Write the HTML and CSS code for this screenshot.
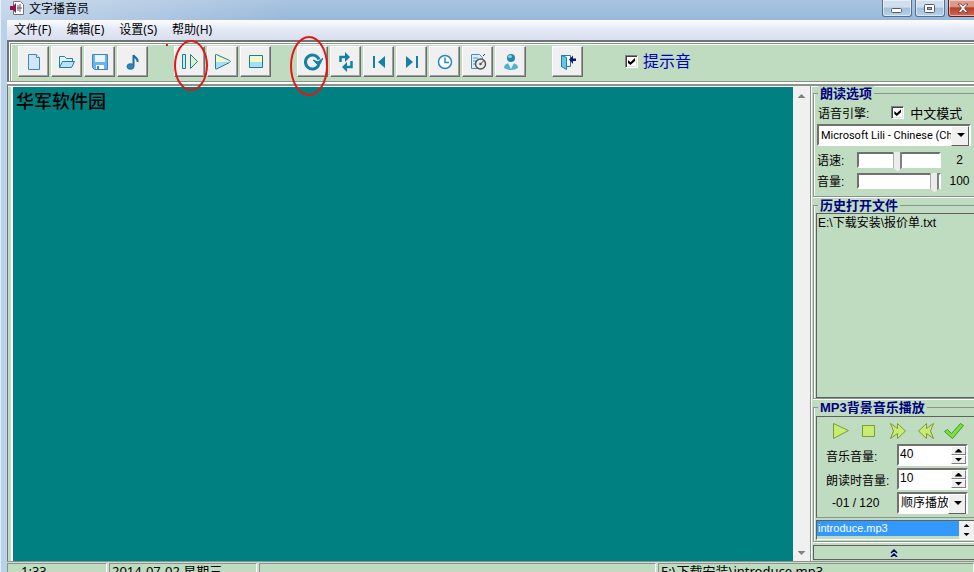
FILE: index.html
```html
<!DOCTYPE html>
<html lang="zh-CN">
<head>
  <meta charset="UTF-8">
  <meta name="viewport" content="width=device-width, initial-scale=1.0">
  <title>文字播音员</title>
  <link rel="stylesheet" href="styles.css">
</head>
<body>
  <div class="window">
    <header class="titlebar">
      <svg class="app-icon" width="14" height="14" viewBox="0 0 14 14">
        <path d="M3.500.5h7l3 3v10h-10z" fill="#fff" stroke="#777"/>
        <path d="M0 5h3l3-3v10l-3-3H0z" fill="#8c1650"/>
        <path d="M8 4v6M10 3v8M7 7h5" stroke="#70506a" fill="none"/>
      </svg>
      <h1>文字播音员</h1>
      <div class="window-controls">
        <button aria-label="最小化"><svg width="12" height="12"><rect x=".5" y="6.500" width="10" height="4" rx="1" fill="#fff" stroke="#555b66"/></svg></button>
        <button aria-label="最大化"><svg width="12" height="12"><rect x=".5" y="2.500" width="10" height="8" rx="1" fill="#fff" stroke="#555b66"/><rect x="3.500" y="5.500" width="4" height="2" fill="#9ab4d0" stroke="#555b66"/></svg></button>
        <button class="close" aria-label="关闭"><svg width="12" height="12"><path d="M1 2h3l2 2 2-2h3L7.500 6 11 10.500H8L6 8l-2 2.500H1L4.500 6z" fill="#fff" stroke="#6b3030" stroke-width=".8"/></svg></button>
      </div>
    </header>

    <nav class="menubar">
      <a href="#">文件(F)</a>
      <a href="#">编辑(E)</a>
      <a href="#">设置(S)</a>
      <a href="#">帮助(H)</a>
    </nav>

    <div class="toolbar">
      <div class="tool-group">
        <button class="tool" aria-label="新建"><svg viewBox="0 0 20 20"><path d="M4.500 2.500h8l3 3v12h-11z" fill="#cfe6fb" stroke="#3d86c6"/><path d="M12.500 2.500v3h3" fill="#fff" stroke="#3d86c6"/></svg></button>
        <button class="tool" aria-label="打开"><svg viewBox="0 0 20 20"><path d="M2.500 15.500v-11h5l2 2h6v3" fill="#e3f7ee" stroke="#1d7fae"/><path d="M2.500 15.500l3-6h12l-3 6z" fill="#b9e3f8" stroke="#1d7fae"/></svg></button>
        <button class="tool" aria-label="保存"><svg viewBox="0 0 20 20"><path d="M2.500 2.500h15v15h-13l-2-2z" fill="#68b4ee" stroke="#3d86c6"/><path d="M5 3h10v7H5z" fill="#e8f6ff"/><path d="M6 13h8v4H6z" fill="#fff"/><path d="M7 14h2v3H7z" fill="#3d86c6"/></svg></button>
        <button class="tool" aria-label="音乐"><svg viewBox="0 0 20 20"><path d="M10.500 14V3c1 3 5 3 4 7" fill="none" stroke="#1e6f9f" stroke-width="2"/><ellipse cx="7.500" cy="14.500" rx="3.500" ry="2.800" fill="#2b86b8" stroke="#1e6f9f"/></svg></button>
      </div>
      <div class="tool-group">
        <button class="tool" aria-label="暂停"><svg viewBox="0 0 20 20"><path d="M2.500 2.500h3v14h-3z" fill="#c8ecf4" stroke="#1c7f8c"/><path d="M10.500 2.500l7 7-7 7z" fill="#ddf4c8" stroke="#1c7f8c" stroke-linejoin="round"/></svg><span class="ring"></span></button>
        <button class="tool" aria-label="播放"><svg viewBox="0 0 20 20"><path d="M3 3l14 7H3z" fill="#eefbc9"/><path d="M3 10h14L3 17z" fill="#a9dcf6"/><path d="M2.500 3q0-1 1-.5l13 6q2 1 0 2l-13 6.500q-1 .5-1-1z" fill="none" stroke="#1c7f8c"/></svg></button>
        <button class="tool" aria-label="停止"><svg viewBox="0 0 20 20"><path d="M4 4h12v6H4z" fill="#eefbc9"/><path d="M4 10h12v6H4z" fill="#a9dcf6"/><path d="M3.500 3.500h13v12h-13z" fill="none" stroke="#1c7f8c"/></svg></button>
      </div>
      <div class="tool-group">
        <button class="tool" aria-label="循环"><svg viewBox="0 0 20 20"><path d="M15.500 13.500a7 7 0 1 1 .5-6" fill="none" stroke="#1380a8" stroke-width="3"/><path d="M10 8l5 2 5-4-4 8z" fill="#1380a8" stroke="#1380a8"/></svg><span class="ring ring-wide"></span></button>
        <button class="tool" aria-label="切换"><svg viewBox="0 0 20 20"><path d="M4.500 10V5H10M15.500 9v6H10" fill="none" stroke="#1380a8" stroke-width="2.500"/><path d="M9 0l5 5-5 5zM11 10v10l-5-5z" fill="#1380a8"/></svg></button>
        <button class="tool" aria-label="上一个"><svg viewBox="0 0 20 20"><path d="M4 4h2v12H4zM16 4v12l-7-6z" fill="#1380a8"/></svg></button>
        <button class="tool" aria-label="下一个"><svg viewBox="0 0 20 20"><path d="M14 4h2v12h-2zM4 4v12l7-6z" fill="#1380a8"/></svg></button>
        <button class="tool" aria-label="定时"><svg viewBox="0 0 20 20"><circle cx="10" cy="10" r="6.500" fill="#fff" stroke="#258abd" stroke-width="1.500"/><path d="M10 5.500v5h4" fill="none" stroke="#258abd" stroke-width="1.500"/></svg></button>
        <button class="tool" aria-label="日程"><svg viewBox="0 0 20 20"><path d="M3.500 2.500h8l3 3v11h-11z" fill="#d9effb" stroke="#4c8ab0"/><path d="M5 6h5M5 9h4M5 12h3" stroke="#4b9bd0"/><circle cx="12.500" cy="12" r="5" fill="#eee" stroke="#555" stroke-width="1.500"/><path d="M12.500 12l3-3M15 4l2-2" stroke="#444"/><circle cx="12.500" cy="12" r="1.300" fill="#555"/></svg></button>
        <button class="tool" aria-label="用户"><svg viewBox="0 0 20 20"><circle cx="10" cy="6" r="4" fill="#2589ac"/><ellipse cx="9" cy="4.500" rx="2" ry="1.500" fill="#8ed2e8"/><path d="M3 16q0-4 5-5l2 2 2-2q5 1 5 5-3 2-7 2t-7-2z" fill="#55b0d0"/><path d="M7 11l3 6 3-6" fill="#e4f5f8"/></svg></button>
      </div>
      <div class="tool-group">
        <button class="tool" aria-label="退出"><svg viewBox="0 0 20 20"><path d="M3.500 3.500h9v11h-9z" fill="#f4ffff" stroke="#1d7fae"/><path d="M3.500 3.500l5 2v12l-5-3z" fill="#6dc2ea" stroke="#1d7fae"/><path d="M11 7.500l4-4v3h3v2.500h-3v3z" fill="#15157a"/></svg></button>
      </div>
      <label class="beep"><input type="checkbox" checked>提示音</label>
      <i class="speck"></i>
    </div>

    <main class="workspace">
      <textarea class="editor" aria-label="文本" spellcheck="false">华军软件园</textarea>
      <div class="scrollbar"><i class="arrow up"></i><i class="arrow down"></i></div>

      <aside class="sidebar">
        <fieldset class="options">
          <legend>朗读选项</legend>
          <div class="engine-row">
            <label for="engine">语音引擎:</label>
            <label class="chinese-mode"><input type="checkbox" checked>中文模式</label>
          </div>
          <div class="select">
            <select id="engine"><option>Microsoft Lili - Chinese (China)</option></select>
          </div>
          <div class="slider-row">
            <label for="speed">语速:</label>
            <input type="range" id="speed" min="-10" max="15" value="2">
            <output for="speed">2</output>
          </div>
          <div class="slider-row">
            <label for="volume">音量:</label>
            <input type="range" id="volume" min="0" max="100" value="100">
            <output for="volume">100</output>
          </div>
        </fieldset>

        <fieldset class="history">
          <legend>历史打开文件</legend>
          <ul class="history-list">
            <li>E:\下载安装\报价单.txt</li>
          </ul>
        </fieldset>

        <fieldset class="music">
          <legend>MP3背景音乐播放</legend>
          <div class="player">
            <div class="player-buttons">
              <button aria-label="播放音乐"><svg viewBox="0 0 20 20"><path d="M2.500 2.500l15 7-15 8z"/></svg></button>
              <button aria-label="停止音乐"><svg viewBox="0 0 20 20"><path d="M3.500 4.500h12v11h-12z"/></svg></button>
              <button aria-label="下一首"><svg viewBox="0 0 20 20"><path d="M2.500 2.500l7 5v-5l8 7.500-8 7.500v-5l-7 5 3-7.500z"/></svg></button>
              <button aria-label="上一首"><svg viewBox="0 0 20 20"><path d="M17.500 2.500l-7 5v-5L2.500 10l8 7.500v-5l7 5-3-7.500z"/></svg></button>
              <button aria-label="确定"><svg viewBox="0 0 20 20"><path class="tick" d="M.5 10.500l3-2 4 4 9-10 3 2-11 13z"/></svg></button>
            </div>
            <div class="player-row">
              <label for="music-volume">音乐音量:</label>
              <div class="spinner">
                <input type="text" id="music-volume" value="40">
                <button aria-label="增大"><i class="arrow up"></i></button>
                <button aria-label="减小"><i class="arrow down"></i></button>
              </div>
            </div>
            <div class="player-row">
              <label for="reading-volume">朗读时音量:</label>
              <div class="spinner">
                <input type="text" id="reading-volume" value="10">
                <button aria-label="增大"><i class="arrow up"></i></button>
                <button aria-label="减小"><i class="arrow down"></i></button>
              </div>
            </div>
            <div class="player-row">
              <label class="position" for="order">-01 / 120</label>
              <div class="select">
                <select id="order"><option>顺序播放</option></select>
              </div>
            </div>
          </div>
          <div class="playlist">
            <ul><li class="selected">introduce.mp3</li></ul>
            <div class="mini-scroll"><i class="arrow up"></i><i class="arrow down"></i></div>
          </div>
        </fieldset>

        <button class="collapse" aria-label="收起"><svg width="8" height="8"><path d="M1 4l3-3 3 3M1 8l3-3 3 3" fill="none" stroke="#000060" stroke-width="1.500"/></svg></button>
      </aside>
    </main>

    <footer class="statusbar">
      <span class="cursor">1:33</span>
      <span class="date">2014-07-02 星期三</span>
      <span></span>
      <span>E:\下载安装\introduce.mp3</span>
    </footer>
  </div>
</body>
</html>
```
FILE: styles.css
```css
:root {
  --green: #c0dcc0;
  --teal: #008080;
  --face: #f0f0f0;
  --navy: #000080;
  --line: #8b948b;
}

* {
  box-sizing: border-box;
}

body {
  margin: 0;
  overflow: hidden;
  font-family: "Liberation Sans", "Noto Sans CJK SC", sans-serif;
  font-size: 12px;
  color: #000;
  background: #b9d1ea;
}

button, input, select, textarea {
  margin: 0;
  padding: 0;
  border: 0;
  border-radius: 0;
  font: inherit;
  color: inherit;
}

ul {
  margin: 0;
  padding: 0;
  list-style: none;
}

/* the status bar runs past the lower edge of the view */
.window {
  display: flex;
  flex-direction: column;
  height: calc(100vh + 13px);
  padding-left: 6px;
  border-left: 1px solid #e6eef7;
}

.titlebar {
  display: flex;
  align-items: flex-start;
  flex: none;
  height: 20px;
  margin-left: -6px;
  padding-left: 9px;
  background: linear-gradient(to right, rgba(255, 255, 255, 0.4), rgba(255, 255, 255, 0) 30%), linear-gradient(#a9c4e1, #98b8da);
}

.app-icon {
  margin-top: 1px;
}

h1 {
  flex: 1;
  margin: 0 0 0 5px;
  font-size: 12px;
  font-weight: normal;
  line-height: 18px;
}

.window-controls {
  display: flex;
  gap: 3px;
  margin-right: -4px;
}

.window-controls button {
  display: flex;
  align-items: center;
  justify-content: center;
  width: 30px;
  height: 17px;
  border: 1px solid #56708f;
  border-top: 0;
  border-radius: 0 0 3px 3px;
  background: linear-gradient(#cfdfef 45%, #a5bfda 50%, #b9d2ea);
  box-shadow: inset 0 0 0 1px rgba(255, 255, 255, 0.5);
}

.window-controls .close {
  border-color: #5b2020;
  background: linear-gradient(#dc9a8a 40%, #b8402c 50%, #cf6a4c);
}

.menubar {
  display: flex;
  flex: none;
  gap: 15px;
  height: 20px;
  padding-left: 7px;
  background: linear-gradient(#fdfdfe, #e4e9f5 45%, #d9dff0);
  font-family: "Noto Sans", "Noto Sans CJK SC", sans-serif;
  line-height: 20px;
}

.menubar a {
  color: #000;
  text-decoration: none;
}

.toolbar {
  position: relative;
  display: flex;
  align-items: center;
  flex: none;
  gap: 26px;
  height: 42px;
  padding-left: 9px;
  border: 2px solid #6f756f;
  border-right: 0;
  border-bottom: 1px solid var(--line);
  background: var(--green);
  box-shadow: inset 1px 1px #fff, inset 2px 2px var(--line), inset 3px 3px #fff, 0 1px #fff;
}

.tool-group {
  display: flex;
  gap: 2px;
}

.tool {
  position: relative;
  display: flex;
  align-items: center;
  justify-content: center;
  width: 31px;
  height: 31px;
  border: 1px solid;
  border-color: #fff #6c6c6c #6c6c6c #fff;
  background: var(--face);
  box-shadow: inset -1px -1px #a0a0a0;
}

.tool svg {
  width: 20px;
  height: 20px;
}

.ring {
  position: absolute;
  z-index: 1;
  top: -7px;
  left: -1px;
  width: 34px;
  height: 51px;
  border: 2px solid #e01818;
  border-radius: 50%;
}

.ring-wide {
  top: -11px;
  left: -8px;
  width: 38px;
  height: 60px;
}

.speck {
  position: absolute;
  top: 2px;
  left: 157px;
  width: 2px;
  height: 2px;
  background: #e01818;
}

.beep {
  display: flex;
  align-items: center;
  gap: 5px;
  margin-left: 16px;
  font-size: 16px;
  line-height: 20px;
  color: #0000c0;
}

input[type="checkbox"] {
  appearance: none;
  width: 13px;
  height: 13px;
  border: 1px solid;
  border-color: #808080 #fff #fff #808080;
  background: #fff;
  box-shadow: inset 1px 1px #404040, inset -1px -1px #e0e0e0;
}

input[type="checkbox"]:checked::before {
  content: "";
  display: block;
  width: 7px;
  height: 7px;
  margin: 2px;
  background: #000;
  clip-path: polygon(0 28%, 35% 62%, 100% 0, 100% 42%, 35% 100%, 0 70%);
}

.workspace {
  display: flex;
  flex: 1;
  min-height: 0;
  margin-top: 2px;
  padding-left: 3px;
  border-top: 2px solid var(--line);
  border-left: 1px solid #6f756f;
  background: var(--green);
  box-shadow: 0 -1px #fff, inset 0 1px #fff;
}

.editor {
  flex: 1;
  min-width: 0;
  margin-top: 1px;
  padding: 2px 3px;
  border-left: 2px solid #fff;
  outline: 0;
  resize: none;
  background: var(--teal);
  font-size: 18px;
  font-weight: 500;
  line-height: 26px;
}

.scrollbar {
  display: flex;
  flex-direction: column;
  align-items: center;
  justify-content: space-between;
  width: 17px;
  padding: 8px 0 6px;
  background: var(--face);
}

.arrow {
  display: block;
  width: 8px;
  height: 4px;
  background: #000;
}

.arrow.up {
  clip-path: polygon(50% 0, 100% 100%, 0 100%);
}

.arrow.down {
  clip-path: polygon(0 0, 100% 0, 50% 100%);
}

.scrollbar .arrow {
  background: #808080;
}

.sidebar {
  display: flex;
  flex-direction: column;
  width: 164px;
  padding-left: 2px;
  border-left: 1px solid var(--line);
  box-shadow: inset 1px 0 #fff;
}

fieldset {
  min-width: 0;
  margin: 0;
  padding: 0 0 0 2px;
  border: 1px solid var(--line);
  border-right: 0;
  box-shadow: inset 1px 0 #fff, 0 1px #fff;
}

legend {
  margin-left: 2px;
  padding: 0 2px;
  background: var(--green);
  font-size: 13px;
  font-weight: bold;
  line-height: 15px;
  color: var(--navy);
}

.options {
  height: 111px;
  padding-left: 3px;
}

.options legend {
  margin-left: 1px;
}

.engine-row {
  display: flex;
  align-items: center;
  gap: 22px;
  height: 23px;
  padding-left: 1px;
}

.chinese-mode {
  display: flex;
  align-items: center;
  gap: 6px;
  font-size: 13px;
}

.select {
  position: relative;
  height: 22px;
  margin-right: 3px;
  border: 2px solid;
  border-color: #707070 #fff #fff #707070;
  background: #fff;
}

.select select {
  display: block;
  width: 100%;
  height: 18px;
  padding: 0 16px 0 2px;
  appearance: none;
  background: transparent;
}

#engine {
  font-family: Roboto, "Liberation Sans", sans-serif;
  font-size: 11px;
}

.select::before {
  content: "";
  position: absolute;
  top: 0;
  right: 0;
  width: 16px;
  height: 18px;
  border: 1px solid;
  border-color: #fff #606060 #606060 #fff;
  background: var(--face);
  pointer-events: none;
}

.select::after {
  content: "";
  position: absolute;
  top: 7px;
  right: 4px;
  width: 8px;
  height: 4px;
  background: #000;
  clip-path: polygon(0 0, 100% 0, 50% 100%);
  pointer-events: none;
}

.slider-row {
  display: grid;
  grid-template-columns: 40px 84px 1fr;
  align-items: center;
  height: 21px;
}

.select + .slider-row {
  margin-top: 3px;
}

.slider-row output {
  padding-left: 4px;
  text-align: center;
}

input[type="range"] {
  appearance: none;
  width: 84px;
  height: 20px;
  background: transparent;
}

input[type="range"]::-webkit-slider-runnable-track {
  height: 16px;
  border: 2px solid;
  border-color: #707070 #fff #fff #707070;
  background: #fff;
}

input[type="range"]::-webkit-slider-thumb {
  appearance: none;
  width: 9px;
  height: 20px;
  margin-top: -2px;
  background: linear-gradient(to right, #a8a8a8 1px, #ececec 1px, #ececec 7px, #808080 7px);
  clip-path: polygon(0 0, 100% 0, 100% 80%, 50% 100%, 0 80%);
}

.history {
  display: flex;
  flex: 1;
  min-height: 0;
  margin-top: 1px;
}

.history-list {
  flex: 1;
  height: 100%;
  padding-left: 1px;
  border: 1px solid #606060;
  border-right: 0;
  line-height: 18px;
}

.music {
  height: 142px;
  margin-top: 1px;
}

.player {
  height: 102px;
  margin-top: 1px;
  padding: 4px 6px 0 9px;
  border: 1px solid #606060;
  border-right: 0;
  border-bottom-color: var(--line);
}

.player-buttons {
  display: flex;
  justify-content: space-between;
  height: 20px;
  margin: 0 4px 3px 5px;
}

.player-buttons button {
  width: 20px;
  height: 20px;
  background: none;
}

.player-buttons svg {
  display: block;
}

.player-buttons path {
  fill: #c8ec70;
  stroke: #7a9a3c;
  stroke-linejoin: round;
}

.player-buttons .tick {
  fill: #7ee03c;
  stroke: #3e9a28;
}

.player-row {
  display: flex;
  justify-content: space-between;
  align-items: center;
  height: 22px;
  margin-bottom: 2px;
  white-space: nowrap;
}

.player-row .select {
  width: 71px;
  margin-right: 0;
}

.position {
  padding-left: 6px;
}

.spinner {
  display: grid;
  grid-template: 1fr 1fr / 1fr 15px;
  flex: none;
  width: 71px;
  height: 22px;
  border: 2px solid;
  border-color: #707070 #fff #fff #707070;
  background: #fff;
}

.spinner input {
  grid-row: 1 / 3;
  min-width: 0;
  height: 16px;
  padding-left: 1px;
  background: transparent;
}

.spinner button {
  display: flex;
  grid-column: 2;
  align-items: center;
  justify-content: center;
  border: 1px solid;
  border-color: #fff #808080 #808080 #fff;
  background: var(--face);
}

.playlist {
  display: flex;
  height: 20px;
  margin-top: 2px;
  border: 1px solid #606060;
  border-right: 0;
  border-bottom-color: #fff;
}

.playlist ul {
  flex: 1;
}

.selected {
  padding-left: 1px;
  background: #3399ff;
  font-size: 11px;
  line-height: 15px;
  color: #fff;
}

.mini-scroll {
  display: flex;
  flex-direction: column;
  align-items: center;
  justify-content: space-around;
  width: 15px;
  background: var(--face);
}

.mini-scroll .arrow {
  width: 6px;
  height: 3px;
}

.collapse {
  height: 15px;
  margin: 3px 0 1px;
  border: 1px solid #606060;
  border-right: 0;
  background: var(--green);
  line-height: 8px;
}

.statusbar {
  display: grid;
  grid-template-columns: 100px 148px 1fr 316px;
  flex: none;
  gap: 2px;
  height: 24px;
  padding-top: 1px;
  border-top: 1px solid var(--line);
  background: #d0dcd0;
  font-family: "Noto Sans", "Noto Sans CJK SC", sans-serif;
  font-size: 13px;
  line-height: 14px;
}

.statusbar span {
  padding-left: 2px;
  border: 1px solid;
  border-color: var(--line) #fff #fff var(--line);
  background: var(--green);
}

.statusbar .cursor {
  padding-left: 13px;
}
```
